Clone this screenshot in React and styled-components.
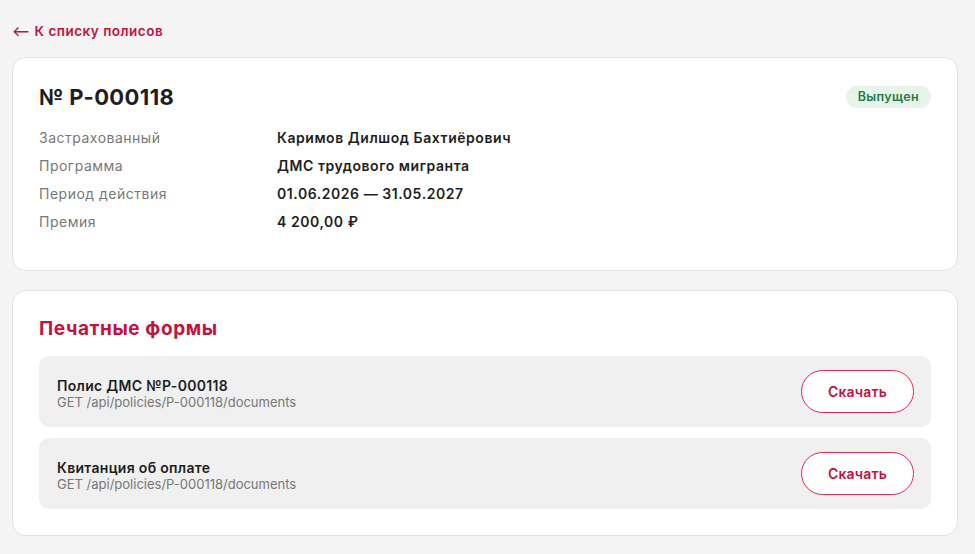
import React from "react";
import styled, { createGlobalStyle } from "styled-components";

const accent = "#c4123f";
const accentBorder = "#e8264f";

const GlobalStyle = createGlobalStyle`
  html, body {
    margin: 0;
    padding: 0;
    background: #f4f4f4;
    font-family: "Inter", "Noto Sans", "Liberation Sans", sans-serif;
    color: #222;
  }
`;

const documents = [
  { title: "Полис ДМС №P-000118", path: "GET /api/policies/P-000118/documents" },
  { title: "Квитанция об оплате", path: "GET /api/policies/P-000118/documents" },
];

const details = [
  ["Застрахованный", "Каримов Дилшод Бахтиёрович"],
  ["Программа", "ДМС трудового мигранта"],
  ["Период действия", "01.06.2026 — 31.05.2027"],
  ["Премия", "4 200,00 ₽"],
];

export default function App() {
  return (
    <Page>
      <GlobalStyle />
      <BackLink href="#">⟵ К списку полисов</BackLink>

      <Card>
        <CardHeader>
          <PolicyTitle>№ P-000118</PolicyTitle>
          <Badge>Выпущен</Badge>
        </CardHeader>
        <DetailGrid>
          {details.map(([label, value]) => (
            <React.Fragment key={label}>
              <Label>{label}</Label>
              <Value>{value}</Value>
            </React.Fragment>
          ))}
        </DetailGrid>
      </Card>

      <Card $compact>
        <SectionTitle>Печатные формы</SectionTitle>
        <DocList>
          {documents.map((doc) => (
            <DocRow key={doc.title}>
              <DocInfo>
                <DocTitle>{doc.title}</DocTitle>
                <DocPath>{doc.path}</DocPath>
              </DocInfo>
              <DownloadButton>Скачать</DownloadButton>
            </DocRow>
          ))}
        </DocList>
      </Card>
    </Page>
  );
}

const Page = styled.div`
  display: flex;
  flex-direction: column;
  gap: 19px;
  padding: 23px 17px 18px 12px;
`;

const BackLink = styled.a`
  align-self: flex-start;
  color: ${accent};
  font-size: 13.5px;
  font-weight: 600;
  letter-spacing: 0.5px;
  text-decoration: none;
  margin-bottom: -1px;
`;

const Card = styled.div`
  background: #fff;
  border: 1px solid #e3e3e3;
  border-radius: 14px;
  padding: ${(p) => (p.$compact ? "25px 26px 26px" : "26px 26px 38px")};
`;

const CardHeader = styled.div`
  display: flex;
  justify-content: space-between;
  align-items: center;
  margin-bottom: 18px;
`;

const PolicyTitle = styled.h1`
  margin: 0;
  font-size: 22px;
  font-weight: 700;
  letter-spacing: 0.4px;
  color: #1e1e1e;
  line-height: 26px;
`;

const Badge = styled.span`
  background: #e6f4ea;
  color: #1f7a45;
  font-size: 12.5px;
  font-weight: 600;
  letter-spacing: 0.4px;
  padding: 3px 12px 4px;
  border-radius: 12px;
`;

const DetailGrid = styled.div`
  display: grid;
  grid-template-columns: 238px 1fr;
  row-gap: 8px;
  font-size: 14px;
  line-height: 20px;
`;

const Label = styled.span`
  color: #787878;
  letter-spacing: 0.5px;
`;

const Value = styled.span`
  color: #1e1e1e;
  font-weight: 600;
  letter-spacing: 0.55px;
`;

const SectionTitle = styled.h2`
  margin: 0 0 14px;
  font-size: 19px;
  font-weight: 700;
  letter-spacing: 0.6px;
  color: ${accent};
  line-height: 26px;
`;

const DocList = styled.div`
  display: flex;
  flex-direction: column;
  gap: 11px;
`;

const DocRow = styled.div`
  display: flex;
  justify-content: space-between;
  align-items: center;
  background: #f0f0f0;
  border-radius: 10px;
  padding: 14px 17px 14px 18px;
  min-height: 43px;
`;

const DocInfo = styled.div`
  display: flex;
  flex-direction: column;
  padding-top: 3px;
`;

const DocTitle = styled.span`
  font-size: 14px;
  font-weight: 600;
  letter-spacing: 0.3px;
  color: #1e1e1e;
  line-height: 17px;
`;

const DocPath = styled.span`
  font-size: 13px;
  color: #777;
  line-height: 16px;
`;

const DownloadButton = styled.button`
  width: 113px;
  height: 43px;
  border: 1px solid ${accentBorder};
  border-radius: 22px;
  background: #fff;
  color: ${accent};
  font-family: inherit;
  font-size: 14px;
  font-weight: 600;
  letter-spacing: 0.2px;
  cursor: pointer;
`;
